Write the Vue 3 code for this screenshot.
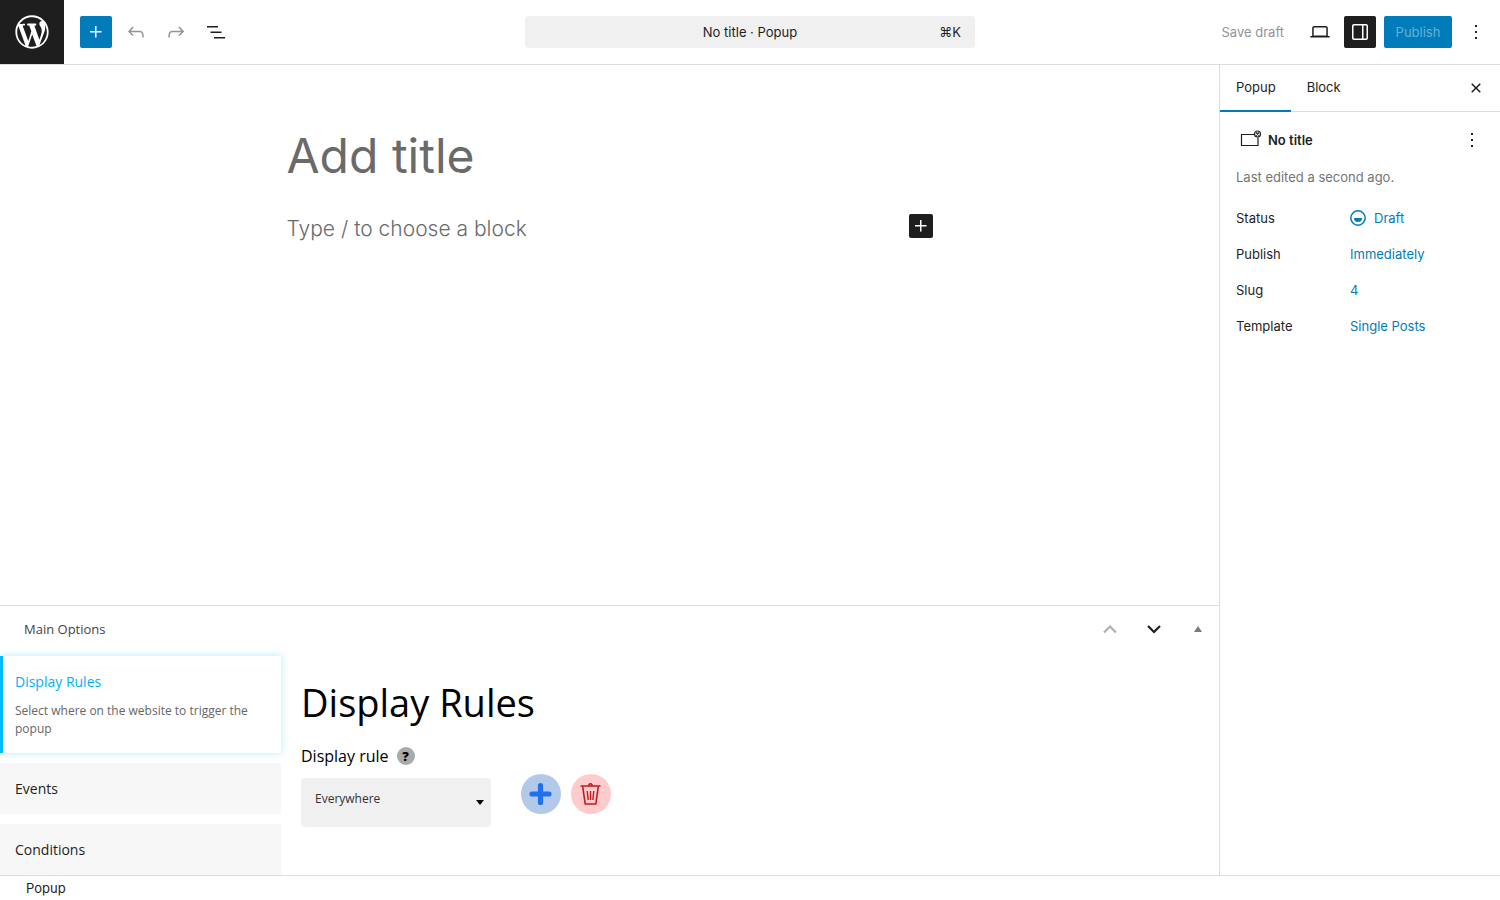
<template>
  <div class="editor">
    <header class="header">
      <div class="header-left">
        <a href="#" class="logo" aria-label="View Popups">
          <svg width="40" height="40" viewBox="-2 -2 24 24"><path :d="icons.wordpress" /></svg>
        </a>
        <div class="tools">
          <button class="icon-btn primary" aria-label="Block inserter">
            <svg width="24" height="24" viewBox="0 0 24 24"><path :d="icons.plus" /></svg>
          </button>
          <button class="icon-btn" aria-label="Undo" disabled>
            <svg width="24" height="24" viewBox="0 0 24 24"><path :d="icons.undo" /></svg>
          </button>
          <button class="icon-btn" aria-label="Redo" disabled>
            <svg width="24" height="24" viewBox="0 0 24 24"><path :d="icons.redo" /></svg>
          </button>
          <button class="icon-btn" aria-label="Document overview">
            <svg width="24" height="24" viewBox="0 0 24 24"><path :d="icons.listView" /></svg>
          </button>
        </div>
      </div>

      <button class="command">
        <span class="command-title">No title · Popup</span>
        <span class="command-key">⌘K</span>
      </button>

      <div class="actions">
        <button class="text-btn" disabled>Save draft</button>
        <button class="icon-btn" aria-label="View">
          <svg width="24" height="24" viewBox="0 0 24 24"><path :d="icons.laptop" /></svg>
        </button>
        <button class="icon-btn pressed" aria-label="Settings">
          <svg width="24" height="24" viewBox="0 0 24 24"><path :d="icons.drawer" /></svg>
        </button>
        <button class="publish">Publish</button>
        <button class="icon-btn" aria-label="Options">
          <svg width="24" height="24" viewBox="0 0 24 24"><path :d="icons.more" /></svg>
        </button>
      </div>
    </header>

    <div class="body">
      <main class="content">
        <section class="canvas">
          <div class="post">
            <input v-model="title" class="post-title" type="text" placeholder="Add title" aria-label="Add title" />
            <div class="block-row">
              <input v-model="block" class="block-input" type="text" placeholder="Type / to choose a block" aria-label="Empty block" />
              <button class="block-add" aria-label="Add block">
                <svg width="24" height="24" viewBox="0 0 24 24"><path :d="icons.plus" /></svg>
              </button>
            </div>
          </div>
        </section>

        <section class="metabox">
          <div class="metabox-head">
            <h2>Main Options</h2>
            <div class="metabox-actions">
              <button class="order-btn" aria-label="Move up" disabled>
                <svg width="16" height="16" viewBox="0 0 16 16"><path d="M2 11.5 8 5.5l6 6" /></svg>
              </button>
              <button class="order-btn" aria-label="Move down">
                <svg width="16" height="16" viewBox="0 0 16 16"><path d="M2 5 8 11l6-6" /></svg>
              </button>
              <button class="toggle-btn" aria-label="Toggle panel">
                <svg width="8" height="6" viewBox="0 0 8 6"><path d="M4 0 8 6H0z" /></svg>
              </button>
            </div>
          </div>

          <div class="metabox-body">
            <nav class="tabs">
              <button
                v-for="tab in tabs"
                :key="tab.name"
                class="tab"
                :class="{ active: tab.name === activeTab }"
                @click="activeTab = tab.name"
              >
                <span class="tab-name">{{ tab.name }}</span>
                <span v-if="tab.name === activeTab && tab.text" class="tab-text">{{ tab.text }}</span>
              </button>
            </nav>

            <div class="rules">
              <h1>Display Rules</h1>
              <div class="rule-label">
                <label for="display-rule">Display rule</label>
                <span class="help">?</span>
              </div>
              <div class="rule-row">
                <div class="select-wrap">
                  <select id="display-rule" v-model="rule">
                    <option>Everywhere</option>
                    <option>Selected posts</option>
                    <option>Selected pages</option>
                  </select>
                  <svg class="caret" width="8" height="5" viewBox="0 0 8 5"><path d="M0 0h8L4 5z" /></svg>
                </div>
                <div class="rule-buttons">
                  <button class="round add" aria-label="Add rule">
                    <svg width="24" height="24" viewBox="0 0 24 24"><path d="M11.5 3.5v17M3 12h17" /></svg>
                  </button>
                  <button class="round remove" aria-label="Remove rule">
                    <svg width="24" height="24" viewBox="0 0 24 24">
                      <path class="lid" d="M1.5 4h20M10 3.500c0-2.400 3-2.400 3 0" />
                      <path class="can" d="M3.700 4.500l2.500 17.500h10.600l2.500-17.500" />
                      <path class="ribs" d="M8.200 9l1 9M11.500 9v9M14.800 9l-1 9" />
                    </svg>
                  </button>
                </div>
              </div>
            </div>
          </div>
        </section>
      </main>

      <aside class="sidebar">
        <div class="side-tabs">
          <button class="side-tab active">Popup</button>
          <button class="side-tab">Block</button>
          <button class="icon-btn side-close" aria-label="Close Settings">
            <svg width="24" height="24" viewBox="0 0 24 24"><path :d="icons.close" /></svg>
          </button>
        </div>
        <div class="summary">
          <div class="summary-head">
            <svg class="popup-icon" width="24" height="24" viewBox="0 0 24 24">
              <path d="M18 6.500H5.500v11h16.500V9.500" />
              <circle cx="21.500" cy="6" r="3" />
              <path d="M20 4.500l3 3M23 4.500l-3 3" />
            </svg>
            <h2>No title</h2>
            <button class="icon-btn small" aria-label="Actions">
              <svg width="24" height="24" viewBox="0 0 24 24"><path :d="icons.more" /></svg>
            </button>
          </div>
          <p class="edited">Last edited a second ago.</p>
          <div v-for="row in rows" :key="row.label" class="row">
            <span class="row-label">{{ row.label }}</span>
            <button class="row-value">
              <svg v-if="row.icon" width="16" height="16" viewBox="0 0 16 16">
                <circle cx="8" cy="8" r="7.200" />
                <path d="M4 8h8a4 4 0 0 1-8 0z" />
              </svg>
              {{ row.value }}
            </button>
          </div>
        </div>
      </aside>
    </div>

    <footer class="footer">Popup</footer>
  </div>
</template>

<script setup>
import { ref } from 'vue'

const title = ref('')
const block = ref('')
const rule = ref('Everywhere')
const activeTab = ref('Display Rules')

const tabs = [
  { name: 'Display Rules', text: 'Select where on the website to trigger the popup' },
  { name: 'Events' },
  { name: 'Conditions' },
]

const rows = [
  { label: 'Status', value: 'Draft', icon: true },
  { label: 'Publish', value: 'Immediately' },
  { label: 'Slug', value: '4' },
  { label: 'Template', value: 'Single Posts' },
]

const icons = {
  wordpress:
    'M20 10c0-5.51-4.49-10-10-10C4.48 0 0 4.49 0 10c0 5.52 4.48 10 10 10 5.51 0 10-4.48 10-10zM7.78 15.37L4.37 6.22c.55-.02 1.17-.08 1.17-.08.5-.06.44-1.13-.06-1.11 0 0-1.45.11-2.37.11-.18 0-.37 0-.58-.01C4.12 2.69 6.87 1.11 10 1.11c2.33 0 4.45.87 6.05 2.34-.68-.11-1.65.39-1.65 1.58 0 .74.45 1.36.9 2.1.35.61.55 1.36.55 2.46 0 1.49-1.4 5-1.4 5l-3.03-8.37c.54-.02.82-.17.82-.17.5-.05.44-1.25-.06-1.22 0 0-1.44.12-2.38.12-.87 0-2.33-.12-2.33-.12-.5-.03-.56 1.2-.06 1.22l.92.08 1.26 3.41zM17.41 10c.24-.64.74-1.87.43-4.25.7 1.29 1.05 2.71 1.05 4.25 0 3.29-1.73 6.24-4.4 7.78.97-2.59 1.94-5.2 2.92-7.78zM6.1 18.09C3.12 16.65 1.11 13.53 1.11 10c0-1.3.23-2.48.72-3.59C3.25 10.3 4.67 14.2 6.1 18.09zm4.03-6.63l2.58 6.98c-.86.29-1.76.45-2.71.45-.79 0-1.57-.11-2.29-.33.81-2.38 1.62-4.74 2.42-7.1z',
  plus: 'M11 12.5V17.5H12.5V12.5H17.5V11H12.5V6H11V11H6V12.5H11Z',
  undo: 'M18.3 11.7c-.6-.6-1.4-.9-2.3-.9H6.7l2.9-3.3-1.1-1-4.5 5L8.5 16l1-1-2.7-2.7H16c.5 0 .9.2 1.3.5 1 1 1 3.4 1 4.5v.3h1.5v-.2c0-1.5 0-4.3-1.5-5.7z',
  redo: 'M15.6 6.5l-1.1 1 2.9 3.3H8c-.9 0-1.7.3-2.3.9-1.4 1.5-1.4 4.2-1.4 5.6v.2h1.5v-.3c0-1.1 0-3.5 1-4.5.3-.3.7-.5 1.3-.5h9.2L14.5 15l1.1 1.1 4.6-4.6-4.6-5z',
  listView: 'M3 6h11v1.5H3V6Zm3.5 5.5h11V13h-11v-1.5ZM21 17H10v1.5h11V17Z',
  laptop:
    'M20.5 16h-.7V8c0-1.1-.9-2-2-2H6.2c-1.1 0-2 .9-2 2v8h-.7c-.8 0-1.5.7-1.5 1.5h20c0-.8-.7-1.5-1.5-1.5zM5.7 8c0-.3.2-.5.5-.5h11.6c.3 0 .5.2.5.5v7.6H5.7V8z',
  drawer:
    'M18 4H6c-1.1 0-2 .9-2 2v12c0 1.1.9 2 2 2h12c1.1 0 2-.9 2-2V6c0-1.1-.9-2-2-2zm-4 14.5H6c-.3 0-.5-.2-.5-.5V6c0-.3.2-.5.5-.5h8v13zm4.5-.5c0 .3-.2.5-.5.5h-2.5v-13H18c.3 0 .5.2.5.5v12z',
  more: 'M13 19h-2v-2h2v2zm0-6h-2v-2h2v2zm0-6h-2V5h2v2z',
  close:
    'M12 13.06l3.712 3.713 1.061-1.06L13.061 12l3.712-3.712-1.06-1.06L12 10.938 8.288 7.227l-1.061 1.06L10.939 12l-3.712 3.712 1.06 1.061L12 13.061z',
}
</script>

<style>
body {
  margin: 0;
}
</style>

<style scoped>
.editor {
  height: 100vh;
  display: flex;
  flex-direction: column;
  background: #fff;
  color: #1e1e1e;
  font-family: Inter, sans-serif;
  font-size: 13px;
  line-height: 20px;
}

.editor *,
.editor *::before {
  box-sizing: border-box;
}

button,
input,
select {
  margin: 0;
  padding: 0;
  border: 0;
  border-radius: 0;
  background: none;
  color: inherit;
  font: inherit;
  outline: none;
}

button {
  cursor: pointer;
}

svg {
  display: block;
  flex: none;
  fill: currentColor;
}

/* Header */
.header {
  display: grid;
  grid-template-columns: 1fr minmax(200px, 450px) 1fr;
  align-items: center;
  border-bottom: 1px solid #ddd;
}

.header-left,
.tools,
.actions {
  display: flex;
  align-items: center;
}

.logo {
  width: 64px;
  height: 64px;
  display: flex;
  align-items: center;
  justify-content: center;
  background: #1e1e1e;
  color: #fff;
}

.tools {
  gap: 8px;
  padding: 0 16px;
}

.icon-btn {
  width: 32px;
  height: 32px;
  display: flex;
  align-items: center;
  justify-content: center;
  border-radius: 2px;
}

.icon-btn:disabled,
.text-btn:disabled {
  color: #949494;
  cursor: default;
}

.icon-btn.primary {
  background: #007cba;
  color: #fff;
}

.icon-btn.pressed {
  background: #1e1e1e;
  color: #fff;
}

.icon-btn.small {
  width: 24px;
  height: 24px;
}

.command {
  height: 32px;
  display: grid;
  grid-template-columns: 1fr auto 1fr;
  align-items: center;
  padding: 0 14px;
  border-radius: 4px;
  background: #f0f0f0;
}

.command-title {
  grid-column: 2;
}

.command-key {
  text-align: right;
}

.actions {
  justify-content: flex-end;
  gap: 8px;
  padding-right: 8px;
}

.text-btn {
  height: 32px;
  padding: 0 12px;
}

.publish {
  width: 68px;
  height: 32px;
  border-radius: 2px;
  background: #007cba;
  color: #66b0d6;
}

/* Layout */
.body {
  flex: 1;
  min-height: 0;
  display: flex;
}

.content {
  flex: 1;
  min-width: 0;
  display: flex;
  flex-direction: column;
}

.canvas {
  flex: 1;
  min-height: 0;
  padding: 57px 32px 0;
  overflow: hidden;
}

.post {
  max-width: 646px;
  margin: 0 auto;
}

.post-title {
  width: 100%;
  height: 68px;
  font-size: 48px;
  line-height: 68px;
}

.block-row {
  display: flex;
  align-items: flex-start;
  margin-top: 20px;
}

.block-input {
  flex: 1;
  min-width: 0;
  height: 38px;
  font-size: 21px;
  font-weight: 300;
  line-height: 38px;
}

.post-title::placeholder,
.block-input::placeholder {
  color: #6a6a6a;
  opacity: 1;
}

.block-add {
  margin-top: 4px;
  border-radius: 2px;
  background: #1e1e1e;
  color: #fff;
}

/* Meta box */
.metabox {
  flex: none;
  height: calc(100% / 3);
  border-top: 1px solid #ddd;
  overflow: hidden;
  font-family: 'Open Sans', sans-serif;
}

.metabox-head {
  display: flex;
  align-items: center;
  justify-content: space-between;
  height: 50px;
  padding: 0 17px 4px 24px;
}

.metabox-head h2 {
  margin: 0;
  color: #444;
  font-size: 13px;
  font-weight: 400;
}

.metabox-actions {
  display: flex;
  align-items: center;
  gap: 28px;
}

.order-btn path {
  fill: none;
  stroke: #1e1e1e;
  stroke-width: 2.2;
}

.order-btn:disabled path {
  stroke: #b0b0b0;
}

.toggle-btn {
  margin-left: 4px;
  color: #787c82;
}

.metabox-body {
  display: flex;
}

.tabs {
  flex: none;
  width: 281px;
  display: flex;
  flex-direction: column;
  gap: 10px;
}

.tab {
  padding: 15px 12px;
  border-left: 3px solid #f7f7f7;
  background: #f7f7f7;
  text-align: left;
}

.tab.active {
  border-color: #00b9ff;
  background: #fff;
  box-shadow: 0 0 8px rgba(0, 185, 255, 0.3);
}

.tab-name,
.tab-text {
  display: block;
}

.tab-name {
  font-size: 14px;
  line-height: 21px;
}

.active .tab-name {
  color: #00b0ff;
}

.tab-text {
  margin-top: 10px;
  color: #666;
  font-size: 12px;
  line-height: 18px;
}

.rules {
  flex: 1;
  padding: 16px 20px;
  color: #000;
}

.rules h1 {
  margin: 0;
  font-size: 38px;
  font-weight: 400;
  line-height: 60px;
}

.rule-label {
  display: flex;
  align-items: center;
  gap: 8px;
  margin-top: 12px;
  font-size: 16px;
  line-height: 24px;
}

.help {
  width: 18px;
  height: 18px;
  border-radius: 50%;
  background: #aaa;
  font-size: 13px;
  font-weight: 800;
  line-height: 18px;
  text-align: center;
}

.rule-row {
  display: flex;
  gap: 30px;
  margin-top: 10px;
}

.select-wrap {
  position: relative;
  width: 190px;
}

.select-wrap select {
  width: 100%;
  height: 49px;
  padding: 0 24px 8px 14px;
  border-radius: 4px;
  background: #f0f0f0;
  color: #333;
  font-size: 12px;
  appearance: none;
}

.caret {
  position: absolute;
  top: 22px;
  right: 7px;
  pointer-events: none;
}

.rule-buttons {
  display: flex;
  gap: 10px;
  margin-top: -4px;
}

.round {
  width: 40px;
  height: 40px;
  display: flex;
  align-items: center;
  justify-content: center;
  border-radius: 50%;
}

.round path {
  fill: none;
  stroke: currentColor;
}

.round.add {
  background: #b3c9ea;
  color: #2171ee;
}

.round.add path {
  stroke-width: 5.2;
  stroke-linecap: round;
}

.round.remove {
  background: #fecccd;
  color: #c5161d;
}

.round .lid,
.round .can {
  stroke-width: 1.6;
}

.round .ribs {
  stroke-width: 1.4;
}

/* Sidebar */
.sidebar {
  flex: none;
  width: 281px;
  border-left: 1px solid #ddd;
}

.side-tabs {
  display: flex;
  height: 47px;
  border-bottom: 1px solid #ddd;
}

.side-tab {
  height: 47px;
  padding: 0 15px 2px 16px;
  border-bottom: 2px solid transparent;
}

.side-tab.active {
  border-color: #007cba;
}

.side-close {
  margin: 7px 8px 0 auto;
}

.summary {
  padding: 16px;
}

.summary-head {
  display: flex;
  align-items: center;
  gap: 8px;
}

.summary-head h2 {
  flex: 1;
  margin: 0;
  font-size: 13px;
  font-weight: 600;
}

.popup-icon {
  overflow: visible;
  fill: none;
  stroke: #1e1e1e;
  stroke-width: 1.2;
}

.edited {
  margin: 15px 0;
  color: #757575;
}

.row {
  display: flex;
  align-items: center;
  height: 32px;
  margin-bottom: 4px;
}

.row-label {
  width: 114px;
}

.row-value {
  display: flex;
  align-items: center;
  gap: 8px;
  color: #007cba;
}

.row-value circle {
  fill: none;
  stroke: currentColor;
  stroke-width: 1.5;
}

/* Footer */
.footer {
  height: 25px;
  padding: 2px 26px;
  border-top: 1px solid #ddd;
}
</style>
